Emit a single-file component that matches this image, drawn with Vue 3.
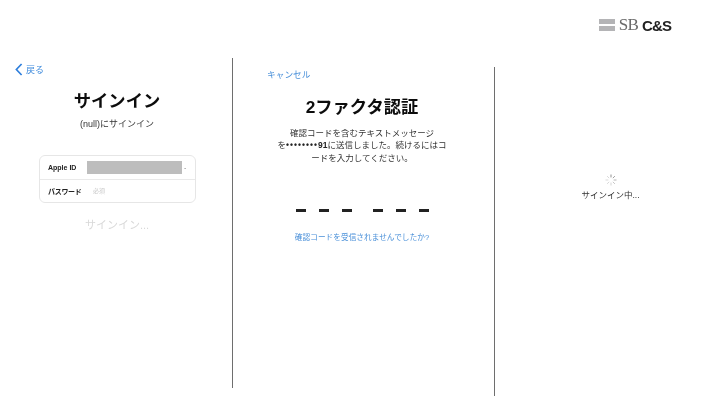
<template>
  <div class="slide">
    <header class="top">
      <div class="brand">
        <div class="brand-mark"><i></i><i></i></div>
        <span class="brand-sb">SB</span>
        <span class="brand-cs">C&amp;S</span>
      </div>
    </header>

    <main class="panels">
      <!-- サインイン -->
      <section class="panel panel-signin">
        <a class="back">
          <svg width="8" height="13" viewBox="0 0 8 13"><path d="M6.6 1 1.4 6.5l5.2 5.5" fill="none" stroke="#2f7fdc" stroke-width="1.7" /></svg>
          <span>戻る</span>
        </a>
        <h1 class="title">サインイン</h1>
        <p class="sub">(null)にサインイン</p>
        <div class="card">
          <div class="row">
            <span class="row-label">Apple ID</span>
            <span class="masked"></span>
            <span class="row-tail">-</span>
          </div>
          <div class="row">
            <span class="row-label kana">パスワード</span>
            <span class="row-hint">必須</span>
          </div>
        </div>
        <p class="signing">サインイン...</p>
      </section>

      <div class="divider divider-a"></div>

      <!-- 2ファクタ認証 -->
      <section class="panel panel-code">
        <a class="cancel">キャンセル</a>
        <h1 class="title">2ファクタ認証</h1>
        <p class="message">
          確認コードを含むテキストメッセージ<br />
          を<b class="dots">••••••••</b><b>91</b>に送信しました。続けるにはコ<br />
          ードを入力してください。
        </p>
        <div class="digits">
          <div class="digit-group"><i v-for="n in 3" :key="n"></i></div>
          <div class="digit-group"><i v-for="n in 3" :key="n"></i></div>
        </div>
        <a class="resend">確認コードを受信されませんでしたか?</a>
      </section>

      <div class="divider divider-b"></div>

      <!-- 処理中 -->
      <section class="panel panel-wait">
        <svg class="spinner" width="12" height="12" viewBox="0 0 12 12">
          <line
            v-for="(o, i) in spokes"
            :key="i"
            x1="6" y1="0.5" x2="6" y2="3.4"
            stroke="#777"
            stroke-width="0.9"
            :stroke-opacity="o"
            :transform="`rotate(${i * 45} 6 6)`"
          />
        </svg>
        <p class="wait-text">サインイン中...</p>
      </section>
    </main>
  </div>
</template>

<script setup>
const spokes = [0.9, 0.75, 0.6, 0.45, 0.35, 0.3, 0.3, 0.3]
</script>

<style>
html,
body {
  margin: 0;
  background: #fff;
}
</style>

<style scoped>
.slide {
  width: 720px;
  height: 405px;
  overflow: hidden;
  background: #fff;
  color: #111;
  font-family: "Liberation Sans", "Noto Sans CJK JP", sans-serif;
  display: flex;
  flex-direction: column;
}

p,
h1 {
  margin: 0;
}

/* ロゴ */
.top {
  height: 58px;
  flex: none;
  display: flex;
  justify-content: flex-end;
  padding: 16px 49px 0 0;
  box-sizing: border-box;
}
.brand {
  height: 18px;
  display: flex;
  align-items: center;
  filter: blur(0.3px);
}
.brand-mark {
  width: 16px;
  display: flex;
  flex-direction: column;
  gap: 2px;
  margin-right: 4px;
}
.brand-mark i {
  display: block;
  height: 5px;
  background: #b4b4b6;
}
.brand-sb {
  font-family: "Liberation Serif", serif;
  font-size: 17px;
  color: #6b6b6b;
  letter-spacing: -0.8px;
  margin-right: 4px;
}
.brand-cs {
  font-size: 15px;
  font-weight: 700;
  color: #222;
  letter-spacing: -0.9px;
}

.panels {
  flex: 1;
  display: flex;
  align-items: flex-start;
}
.panel {
  flex: none;
  display: flex;
  flex-direction: column;
  filter: blur(0.3px);
}
.divider {
  width: 1px;
  flex: none;
  background: #6e6e6e;
}
.divider-a {
  height: 330px;
}
.divider-b {
  height: 329px;
  margin-top: 9px;
}

.title {
  font-size: 17.3px;
  line-height: 22px;
  font-weight: 700;
  color: #0c0c0c;
  text-align: center;
}

/* 左 */
.panel-signin {
  width: 232px;
  padding-top: 4px;
  box-sizing: border-box;
}
.back {
  display: flex;
  align-items: center;
  gap: 3px;
  height: 14px;
  padding-left: 15px;
  font-size: 9px;
  color: #3f8bdc;
}
.panel-signin .title {
  margin-top: 14px;
  width: 234px;
}
.sub {
  margin-top: 6px;
  width: 234px;
  font-size: 9px;
  line-height: 12px;
  text-align: center;
  color: #333;
}
.card {
  width: 157px;
  height: 48px;
  margin: 25px 0 0 39px;
  box-sizing: border-box;
  border: 1px solid #e6e6e6;
  border-radius: 6px;
  display: flex;
  flex-direction: column;
}
.row {
  flex: 1;
  display: flex;
  align-items: center;
  padding-left: 8px;
}
.row + .row {
  border-top: 1px solid #e9e9e9;
}
.row-label {
  width: 39px;
  flex: none;
  font-size: 7px;
  font-weight: 700;
  color: #222;
}
.row-label.kana {
  letter-spacing: -0.3px;
}
.masked {
  width: 95px;
  height: 13px;
  background: #bdbdbd;
}
.row-tail {
  font-size: 7px;
  color: #888;
  margin-left: 2px;
}
.row-hint {
  font-size: 6px;
  color: #c8c8c8;
  margin-left: 6px;
}
.signing {
  margin-top: 14px;
  width: 234px;
  font-size: 11px;
  line-height: 16px;
  text-align: center;
  color: #d9d9d9;
}

/* 中央 */
.panel-code {
  width: 261px;
  padding-top: 11px;
  box-sizing: border-box;
}
.cancel {
  height: 12px;
  line-height: 12px;
  padding-left: 34px;
  font-size: 8.7px;
  color: #4a90d9;
}
.panel-code .title {
  margin-top: 15px;
  width: 258px;
}
.message {
  margin-top: 8.5px;
  width: 258px;
  font-size: 8.5px;
  line-height: 12.5px;
  text-align: center;
  color: #333;
}
.message b {
  color: #222;
}
.message .dots {
  letter-spacing: 1px;
}
.digits {
  margin: 45px 0 0 63px;
  display: flex;
  gap: 21px;
}
.digit-group {
  display: flex;
  gap: 13px;
}
.digit-group i {
  display: block;
  width: 10px;
  height: 2.5px;
  background: #222;
}
.resend {
  margin-top: 20px;
  width: 258px;
  font-size: 7.7px;
  line-height: 12px;
  text-align: center;
  color: #4a90d9;
}

/* 右 */
.panel-wait {
  width: 225px;
  padding: 116px 0 0 0;
  box-sizing: border-box;
  align-items: center;
  margin-left: 3px;
}
.spinner {
  display: block;
}
.wait-text {
  margin-top: 3px;
  font-size: 8.5px;
  line-height: 12px;
  color: #333;
}
</style>
